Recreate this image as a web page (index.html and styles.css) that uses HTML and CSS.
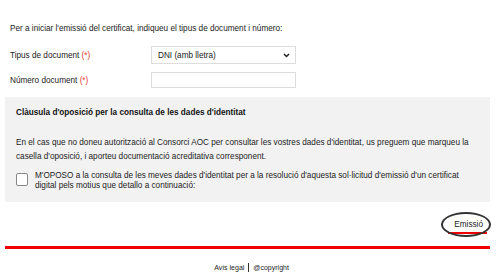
FILE: index.html
```html
<!DOCTYPE html>
<html lang="ca">
<head>
  <meta charset="UTF-8" />
  <title>Emissió del certificat</title>
  <link rel="stylesheet" href="styles.css">
</head>
<body>
  <div class="page">
    <p class="intro">Per a iniciar l'emissió del certificat, indiqueu el tipus de document i número:</p>

    <form class="doc-form">
      <div class="row">
        <label for="tipus">Tipus de document <span class="req">(*)</span></label>
        <div class="select-box">
          <span>DNI (amb lletra)</span>
          <svg width="7" height="5" viewBox="0 0 7 5"><path d="M1 1 L3.5 3.5 L6 1" fill="none" stroke="#222" stroke-width="1.5"/></svg>
        </div>
      </div>
      <div class="row">
        <label for="numero">Número document <span class="req">(*)</span></label>
        <input type="text" id="numero" class="text-input">
      </div>

      <div class="clausula">
        <h2>Clàusula d'oposició per la consulta de les dades d'identitat</h2>
        <p>En el cas que no doneu autorització al Consorci AOC per consultar les vostres dades d'identitat, us preguem que marqueu la casella d'oposició, i aporteu documentació acreditativa corresponent.</p>
        <div class="check-row">
          <span class="check"></span>
          <span class="check-text">M'OPOSO a la consulta de les meves dades d'identitat per a la resolució d'aquesta sol·licitud d'emissió d'un certificat digital pels motius que detallo a continuació:</span>
        </div>
      </div>

      <div class="actions">
        <button type="button" class="emissio">Emissió<span class="ring"></span></button>
      </div>
    </form>

    <div class="red-line"></div>

    <div class="footer">
      <span>Avís legal</span>
      <span class="sep"></span>
      <span>@copyright</span>
    </div>
  </div>
</body>
</html>
```

FILE: styles.css
```css
* { margin: 0; padding: 0; box-sizing: border-box; }
body {
  font-family: 'Liberation Sans', Arial, sans-serif;
  font-size: 8.2px;
  color: #222;
  background: #fff;
}
.page {
  width: 485px;
  margin-left: 5px;
}
.intro {
  padding: 23px 5px 0;
  line-height: 12px;
}
.doc-form { margin-top: 11px; }
.row {
  display: flex;
  align-items: center;
  padding-left: 5px;
  height: 18px;
  margin-bottom: 7px;
}
.row label {
  width: 141px;
}
.req { color: #e8382c; }
.select-box {
  width: 145px;
  height: 18px;
  border: 1px solid #ddd;
  display: flex;
  align-items: center;
  justify-content: space-between;
  padding: 0 5px 0 6px;
}
.text-input {
  width: 145px;
  height: 16px;
  border: 1px solid #ddd;
}
.clausula {
  background: #f2f2f2;
  margin-top: 8px;
  height: 105px;
  padding: 10px 5px 0 11px;
}
.clausula h2 {
  font-size: 8.2px;
  font-weight: bold;
  line-height: 12px;
  color: #111;
}
.clausula p {
  margin-top: 17px;
  line-height: 14px;
}
.check-row {
  display: flex;
  align-items: flex-start;
  margin-top: 7px;
  gap: 7px;
}
.check {
  flex: none;
  width: 12px;
  height: 13px;
  border: 1px solid #888;
  border-radius: 2px;
  background: #fff;
  margin-top: 2px;
}
.check-text {
  flex: 1;
  line-height: 10px;
  padding-right: 6px;
}
.actions {
  display: flex;
  justify-content: flex-end;
  padding: 14px 3px 0 0;
  height: 44px;
}
.emissio {
  position: relative;
  font-family: inherit;
  font-size: 8.2px;
  color: #222;
  background: #fff;
  border: none;
  border-bottom: 2px solid #e00;
  height: 18px;
  padding: 0 4px 0 6px;
}
.ring {
  position: absolute;
  left: -7px;
  top: -4px;
  right: -4px;
  bottom: -5px;
  border: 2px solid #333;
  border-radius: 50%;
}
.red-line {
  height: 3px;
  background: #e00;
}
.footer {
  display: flex;
  justify-content: center;
  align-items: center;
  gap: 4px;
  font-size: 7px;
  margin-top: 14px;
  padding-left: 8px;
}
.sep {
  width: 1px;
  height: 9px;
  background: #333;
}
```
